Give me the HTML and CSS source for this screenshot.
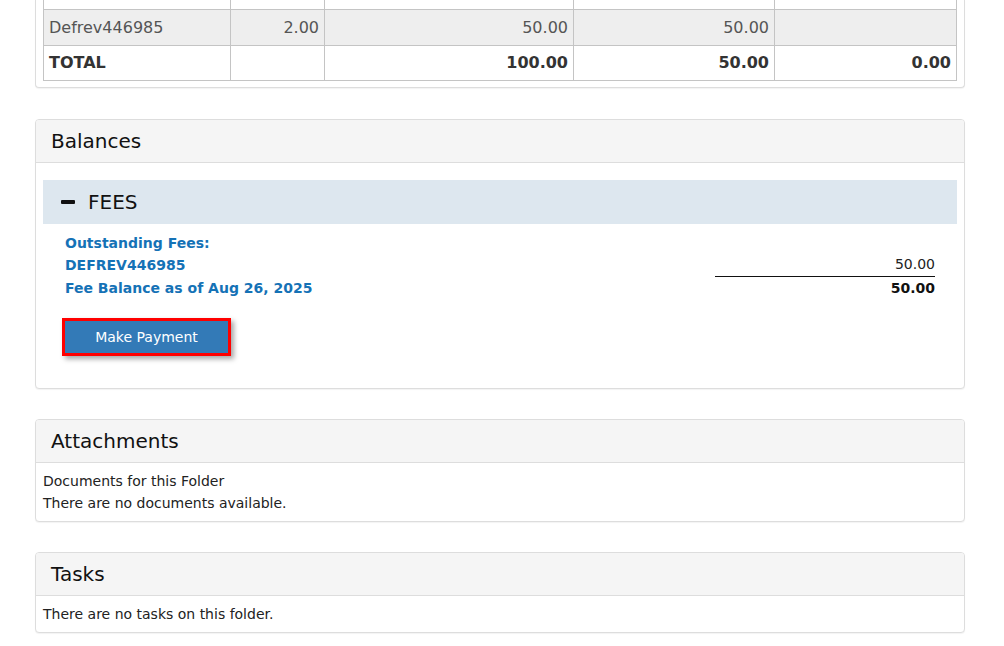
FILE: index.html
```html
<!DOCTYPE html>
<html>
<head>
<meta charset="utf-8">
<link rel="stylesheet" href="styles.css">
</head>
<body>
<div class="page">
  <div class="panel panel-top">
    <table class="grid">
      <colgroup>
        <col class="c1"><col class="c2"><col class="c3"><col class="c4"><col class="c5">
      </colgroup>
      <tr class="cut"><td></td><td></td><td></td><td></td><td></td></tr>
      <tr class="shade">
        <td>Defrev446985</td><td class="num">2.00</td><td class="num">50.00</td><td class="num">50.00</td><td></td>
      </tr>
      <tr class="total">
        <td>TOTAL</td><td></td><td class="num">100.00</td><td class="num">50.00</td><td class="num">0.00</td>
      </tr>
    </table>
  </div>

  <div class="panel">
    <div class="panel-head">Balances</div>
    <div class="panel-body balances">
      <div class="fees-bar"><span class="minus"></span><span>FEES</span></div>
      <div class="fees-content">
        <div class="fees-rows">
          <div class="fees-labels">
            <div>Outstanding Fees:</div>
            <div>DEFREV446985</div>
            <div>Fee Balance as of Aug 26, 2025</div>
          </div>
          <div class="fees-amounts">
            <div>&nbsp;</div>
            <div class="amt-line">50.00</div>
            <div class="amt-total">50.00</div>
          </div>
        </div>
        <button class="pay-btn">Make Payment</button>
      </div>
    </div>
  </div>

  <div class="panel panel-tight">
    <div class="panel-head">Attachments</div>
    <div class="panel-body text-body">
      <div>Documents for this Folder</div>
      <div>There are no documents available.</div>
    </div>
  </div>

  <div class="panel panel-tight">
    <div class="panel-head">Tasks</div>
    <div class="panel-body text-body">
      <div>There are no tasks on this folder.</div>
    </div>
  </div>
</div>
</body>
</html>
```
FILE: styles.css
```css
* { box-sizing: border-box; }
html, body { margin: 0; padding: 0; background: #fff; }
body {
  font-family: "DejaVu Sans", Verdana, sans-serif;
  font-size: 14px;
  color: #222;
}
.page {
  width: 930px;
  margin-left: 35px;
  padding-bottom: 20px;
}
.panel {
  border: 1px solid #ddd;
  border-radius: 4px;
  background: #fff;
  margin-top: 31px;
  box-shadow: 0 1px 1px rgba(0,0,0,0.05);
}
.panel-tight { margin-top: 30px; }
.panel-top {
  margin-top: 0;
  border-top: none;
  border-radius: 0 0 4px 4px;
  padding: 0 7px 6px 7px;
}
.grid {
  width: 913px;
  border-collapse: collapse;
  table-layout: fixed;
  font-size: 16px;
}
.grid col.c1 { width: 187px; }
.grid col.c2 { width: 94px; }
.grid col.c3 { width: 249px; }
.grid col.c4 { width: 201px; }
.grid col.c5 { width: 182px; }
.grid td {
  border: 1px solid #c4c4c4;
  padding: 0 5px;
  height: 36px;
  color: #555;
  white-space: nowrap;
}
.grid tr.cut td { height: 9px; border-top: none; padding: 0; }
.grid tr.shade td { background: #eee; }
.grid tr.total td { height: 35px; font-weight: bold; color: #333; }
.grid td.num { text-align: right; }

.panel-head {
  background: #f5f5f5;
  border-bottom: 1px solid #ddd;
  border-radius: 3px 3px 0 0;
  height: 43px;
  padding-left: 15px;
  font-size: 20px;
  line-height: 43px;
  color: #111;
}
.panel-body { padding: 7px; }
.balances { padding: 17px 7px 32px 7px; }
.fees-bar {
  background: #dde7ef;
  height: 44px;
  display: flex;
  align-items: center;
  padding-left: 18px;
  font-size: 20px;
  color: #111;
}
.minus {
  display: inline-block;
  width: 14px;
  height: 4px;
  background: #111;
  margin-right: 13px;
  border-radius: 1px;
}
.fees-content { padding: 8px 22px 0 22px; }
.fees-rows {
  display: flex;
  justify-content: space-between;
}
.fees-labels {
  color: #1572b6;
  font-weight: bold;
  line-height: 22.5px;
}
.fees-amounts {
  width: 220px;
  text-align: right;
  line-height: 22.5px;
  color: #222;
}
.amt-line {
  border-bottom: 1px solid #111;
  line-height: 21.5px;
}
.amt-total { font-weight: bold; color: #111; }
.pay-btn {
  margin-top: 19px;
  margin-left: -3px;
  width: 169px;
  height: 38px;
  border: 3px solid #f00;
  background: #337ab7;
  color: #fff;
  font-family: "DejaVu Sans", Verdana, sans-serif;
  font-size: 14px;
  box-shadow: 3px 3px 5px rgba(0,0,0,0.35);
  display: block;
  padding: 0;
}
.text-body {
  line-height: 22px;
  color: #222;
}
```
